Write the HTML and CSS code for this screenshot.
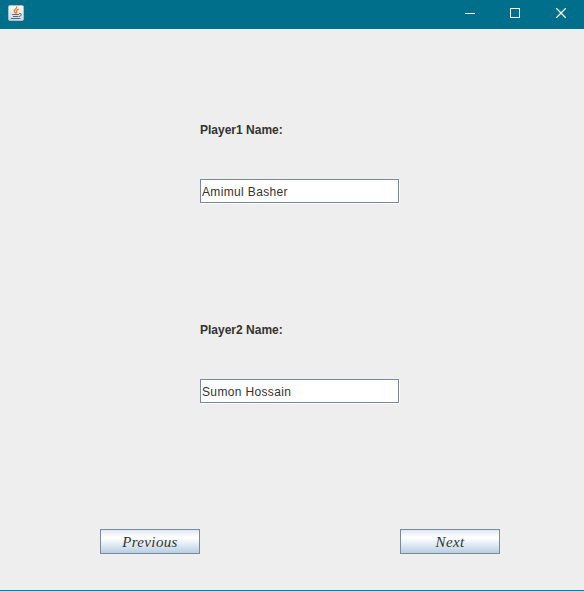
FILE: index.html
```html
<!DOCTYPE html>
<html lang="en">
<head>
<meta charset="utf-8">
<title>Players</title>
<link rel="stylesheet" href="styles.css">
</head>
<body>
<div class="window">
  <header class="titlebar">
    <svg class="java" width="16" height="16" viewBox="0 0 16 16">
      <defs><linearGradient id="tile" x1="0" y1="0" x2="0" y2="1"><stop offset="0" stop-color="#fafafa"/><stop offset="1" stop-color="#d3d7da"/></linearGradient></defs>
      <rect x=".5" y=".5" width="15" height="15" rx="1.5" fill="url(#tile)" stroke="#aebcc4"/>
      <g fill="none" stroke-linecap="round">
        <path d="M8.600 1.800C9.300 4 5.500 4.300 6.200 6.200Q6.500 7.100 7.500 8M10.300 4.300Q7.500 5.300 8.600 6.600Q9.200 7.300 8.400 8" stroke="#ee7b28" stroke-width="1.200"/>
        <path d="M4.500 9.500H10.500M5.300 11.500H10M3.300 13.500H12M11.500 8.500Q13.800 8.200 13.300 9.900Q12.900 11.200 11.200 11.500" stroke="#456f91"/>
      </g>
    </svg>
    <svg class="controls" width="102" height="11" viewBox="0 0 102 11" fill="none" stroke="#fff">
      <path d="M0 5.500H10"/>
      <rect x="45.500" y=".5" width="9" height="9"/>
      <path d="M91.300 .3l9.400 9.400m0-9.400l-9.400 9.400" stroke-width="1.300"/>
    </svg>
  </header>
  <main class="form">
    <label class="label" for="p1">Player1 Name:</label>
    <input class="field" id="p1" type="text" value="Amimul Basher">
    <label class="label second" for="p2">Player2 Name:</label>
    <input class="field" id="p2" type="text" value="Sumon Hossain">
    <div class="actions">
      <button class="button">Previous</button>
      <button class="button">Next</button>
    </div>
  </main>
</div>
</body>
</html>
```
FILE: styles.css
```css
* { box-sizing: border-box; }
body { margin: 0; }
.window {
  height: 591px;
  display: flex;
  flex-direction: column;
  background: #eee;
  border-bottom: 1px solid #00809a;
  overflow: hidden;
}
.titlebar {
  height: 29px;
  flex: none;
  display: flex;
  justify-content: space-between;
  align-items: flex-start;
  padding: 5px 17px 0 8px;
  background: #006f8b;
}
.controls { margin-top: 3px; }
.form {
  display: flex;
  flex-direction: column;
  padding: 92px 84px 0 100px;
}
.label {
  margin-left: 100px;
  height: 18px;
  font: bold 12px/18px "Liberation Sans", Arial, sans-serif;
  color: #333;
}
.second { margin-top: 118px; }
.field {
  width: 199px;
  height: 24px;
  margin: 40px 0 0 100px;
  padding: 1px 1px 0;
  border: 1px solid #7a8a99;
  border-radius: 0;
  box-shadow: 1px 1px 0 #fff;
  background: #fff;
  font: 12px "Liberation Sans", Arial, sans-serif;
  letter-spacing: 0.35px;
  color: #333;
  outline: none;
}
.actions {
  display: flex;
  justify-content: space-between;
  margin-top: 126px;
}
.button {
  width: 100px;
  height: 25px;
  padding: 2px 0 0;
  border: 1px solid #7a8a99;
  background: linear-gradient(#dde8f3 0%, #fff 30%, #fff 35%, #b8cfe5 100%);
  font: italic 15px "Liberation Serif", "Times New Roman", serif;
  letter-spacing: 0.35px;
  color: #333;
}
```
